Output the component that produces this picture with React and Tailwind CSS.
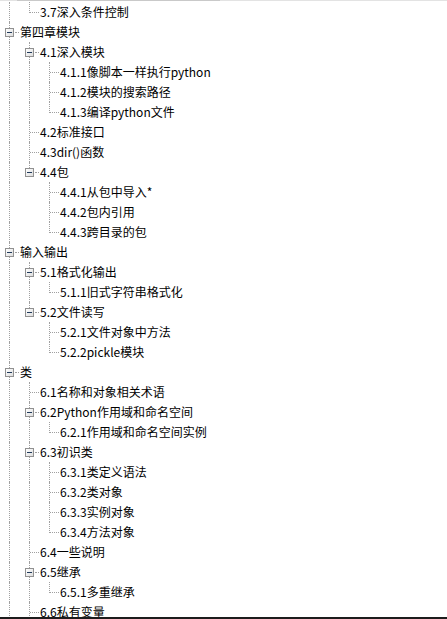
import React from 'react';

const rows = [
    { t: '3.7深入条件控制', l: 1, last: true },
    { t: '第四章模块', l: 0, box: true },
    { t: '4.1深入模块', l: 1, box: true },
    { t: '4.1.1像脚本一样执行python', l: 2 },
    { t: '4.1.2模块的搜索路径', l: 2 },
    { t: '4.1.3编译python文件', l: 2, last: true },
    { t: '4.2标准接口', l: 1 },
    { t: '4.3dir()函数', l: 1 },
    { t: '4.4包', l: 1, box: true, last: true },
    { t: '4.4.1从包中导入*', l: 2 },
    { t: '4.4.2包内引用', l: 2 },
    { t: '4.4.3跨目录的包', l: 2, last: true },
    { t: '输入输出', l: 0, box: true },
    { t: '5.1格式化输出', l: 1, box: true },
    { t: '5.1.1旧式字符串格式化', l: 2, last: true },
    { t: '5.2文件读写', l: 1, box: true, last: true },
    { t: '5.2.1文件对象中方法', l: 2 },
    { t: '5.2.2pickle模块', l: 2, last: true },
    { t: '类', l: 0, box: true },
    { t: '6.1名称和对象相关术语', l: 1 },
    { t: '6.2Python作用域和命名空间', l: 1, box: true },
    { t: '6.2.1作用域和命名空间实例', l: 2, last: true },
    { t: '6.3初识类', l: 1, box: true },
    { t: '6.3.1类定义语法', l: 2 },
    { t: '6.3.2类对象', l: 2 },
    { t: '6.3.3实例对象', l: 2 },
    { t: '6.3.4方法对象', l: 2, last: true },
    { t: '6.4一些说明', l: 1 },
    { t: '6.5继承', l: 1, box: true },
    { t: '6.5.1多重继承', l: 2, last: true },
    { t: '6.6私有变量', l: 1 },
];

// work out which guide lines run past each row
const withGuides = (() => {
    const cont = [true];
    return rows.map((r) => {
        const guides = [];
        for (let d = 0; d < r.l; d++) guides.push(!!cont[d]);
        cont[r.l] = !r.last;
        return { ...r, guides };
    });
})();

const dot = "border-dotted border-[#a0a0a0]";

const GuideCell = ({ on }) => (
    <div className="w-5 h-5 flex-none relative">
        {on && <span className={`absolute left-[9px] top-0 h-5 border-l ${dot}`} />}
    </div>
);

const NodeCell = ({ box, last }) => (
    <div className="w-5 h-5 flex-none relative">
        {box ? (
            <>
                <span className={`absolute left-[9px] top-0 h-[6px] border-l ${dot}`} />
                {!last && <span className={`absolute left-[9px] top-[15px] h-[5px] border-l ${dot}`} />}
                <span className="absolute left-[5px] top-[6px] w-[9px] h-[9px] border border-[#919191] bg-gradient-to-br from-white to-[#dcdcdc] flex items-center justify-center">
                    <span className="w-[5px] h-px bg-[#1e395b]" />
                </span>
                <span className={`absolute left-[15px] top-[10px] w-[4px] border-t ${dot}`} />
            </>
        ) : (
            <>
                <span className={`absolute left-[9px] top-0 ${last ? 'h-[11px]' : 'h-5'} border-l ${dot}`} />
                <span className={`absolute left-[10px] top-[10px] w-[9px] border-t ${dot}`} />
            </>
        )}
    </div>
);

export default function App() {
    return (
        <div className="w-[447px] h-[619px] flex flex-col bg-white overflow-hidden" style={{ fontFamily: '"Noto Sans CJK SC", "Noto Sans", sans-serif' }}>
            <div className="h-px flex-none bg-[#e3e3e3] flex">
                <div className="ml-[17px] w-[203px] bg-[#c9c9c9]" />
            </div>
            <div className="flex-1 overflow-hidden pt-px">
                {withGuides.map((r, i) => (
                    <div key={i} className="flex h-5 items-center">
                        {r.guides.map((g, d) => <GuideCell key={d} on={g} />)}
                        <NodeCell box={r.box} last={r.last} />
                        <span className="text-[12px] leading-5 text-black whitespace-nowrap">{r.t}</span>
                    </div>
                ))}
            </div>
            <div className="h-[2px] flex-none bg-[#1c1c1c]" />
        </div>
    );
}
